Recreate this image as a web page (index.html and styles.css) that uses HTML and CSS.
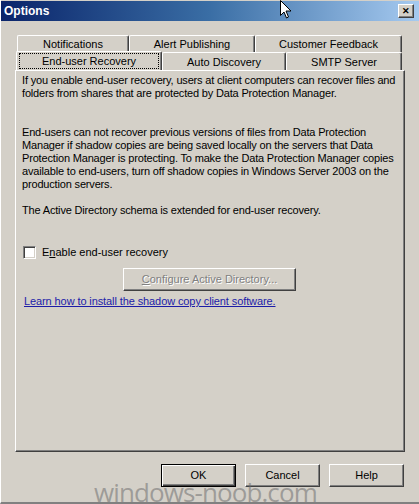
FILE: index.html
```html
<!DOCTYPE html>
<html lang="en">
  <head>
    <meta charset="UTF-8" />
    <title>Options</title>
    <link rel="stylesheet" href="styles.css">
  </head>
  <body>
    <div class="window">
      <div class="titlebar">
        <span class="title">Options</span>
        <span class="close">&#x2715;</span>
      </div>

      <div class="tabs">
        <div class="tab-row back">
          <div class="tab t-notif">Notifications</div>
          <div class="tab t-alert">Alert Publishing</div>
          <div class="tab t-cust">Customer Feedback</div>
        </div>
        <div class="tab-row front">
          <div class="tab t-user selected"><span class="focus">End-user Recovery</span></div>
          <div class="tab t-auto">Auto Discovery</div>
          <div class="tab t-smtp">SMTP Server</div>
        </div>
      </div>

      <div class="panel">
        <p>If you enable end-user recovery, users at client computers can recover files and<br>
        folders from shares that are protected by Data Protection Manager.</p>
        <p class="gap">End-users can not recover previous versions of files from Data Protection<br>
        Manager if shadow copies are being saved locally on the servers that Data<br>
        Protection Manager is protecting. To make the Data Protection Manager copies<br>
        available to end-users, turn off shadow copies in Windows Server 2003 on the<br>
        production servers.</p>
        <p class="ad">The Active Directory schema is extended for end-user recovery.</p>

        <label class="check"><span class="box"></span><span>E<u>n</u>able end-user recovery</span></label>
        <div class="configure"><span class="btn disabled"><u>C</u>onfigure Active Directory...</span></div>
        <a class="learn" href="#">Learn how to install the shadow copy client software.</a>
      </div>

      <div class="buttons">
        <span class="btn default">OK</span>
        <span class="btn">Cancel</span>
        <span class="btn">Help</span>
      </div>

      <div class="watermark">windows-noob.com</div>
      <svg class="cursor" width="12" height="19" viewBox="0 0 12 19">
        <path d="M0.5 0.5 L0.5 15.5 L4 12 L6.5 18 L8.5 17 L6 11 L11 11 Z" fill="#fff" stroke="#000" stroke-width="1"/>
      </svg>
    </div>
  </body>
</html>
```

FILE: styles.css
```css
body {
  margin: 0;
  padding: 0;
  background: #d4d0c8;
  font-family: "Liberation Sans", Arial, sans-serif;
  font-size: 11px;
  color: #000;
}
.window {
  position: relative;
  width: 419px;
  height: 504px;
  background: #d4d0c8;
  box-sizing: border-box;
  border-left: 1px solid #fff;
  border-bottom: 2px solid #808080;
  overflow: hidden;
}
.titlebar {
  height: 20px;
  margin-top: 1px;
  background: linear-gradient(to right, #0a246a, #3a6ea5 50%, #a6caf0);
  display: flex;
  align-items: center;
  justify-content: space-between;
  padding: 0 5px 0 3px;
}
.title {
  color: #fff;
  font-weight: bold;
  font-size: 12px;
}
.close {
  width: 14px;
  height: 12px;
  background: #d4d0c8;
  border: 1px solid;
  border-color: #fff #404040 #404040 #fff;
  box-shadow: inset -1px -1px #808080;
  font-size: 9px;
  font-weight: bold;
  line-height: 12px;
  text-align: center;
}
.tabs {
  margin-top: 14px;
  padding-left: 15px;
}
.tab-row {
  display: flex;
  height: 17px;
}
.tab-row.back {
  padding-left: 1px;
}
.tab-row.front {
  height: 18px;
}
.tab {
  box-sizing: border-box;
  border-top: 1px solid #fff;
  border-left: 1px solid #fff;
  border-right: 1px solid #404040;
  box-shadow: inset -1px 0 #808080;
  border-radius: 2px 2px 0 0;
  text-align: center;
  line-height: 16px;
  white-space: nowrap;
}
.t-notif { width: 112px; }
.t-alert { width: 126px; }
.t-cust { width: 147px; }
.t-user { width: 146px; }
.t-auto { width: 124px; }
.t-smtp { width: 116px; }
.tab-row.front .tab {
  line-height: 19px;
}
.tab.selected {
  position: relative;
  z-index: 1;
  height: 19px;
  margin-top: -1px;
  line-height: 16px;
  padding: 1px 2px 0;
  background: #d4d0c8;
}
.focus {
  display: block;
  border: 1px dotted #000;
  line-height: 14px;
  height: 16px;
  box-sizing: border-box;
}
.panel {
  box-sizing: border-box;
  margin-left: 14px;
  width: 390px;
  height: 382px;
  border: 1px solid;
  border-color: #fff #404040 #404040 #fff;
  box-shadow: inset -1px -1px #808080;
  padding: 3px 6px 0 6px;
  line-height: 13px;
}
.panel p {
  margin: 0;
  white-space: nowrap;
  letter-spacing: -0.17px;
}
.panel .gap {
  margin-top: 26px;
}
.panel .ad {
  margin-top: 13px;
}
.check {
  display: flex;
  align-items: center;
  gap: 6px;
  margin-top: 29px;
  margin-left: 1px;
}
.box {
  width: 13px;
  height: 13px;
  box-sizing: border-box;
  background: #fff;
  border: 1px solid;
  border-color: #808080 #fff #fff #808080;
  box-shadow: inset 1px 1px #404040, inset -1px -1px #d4d0c8;
}
.configure {
  margin-top: 9px;
  padding-left: 101px;
}
.btn {
  box-sizing: border-box;
  display: inline-block;
  width: 75px;
  height: 23px;
  line-height: 21px;
  text-align: center;
  border: 1px solid;
  border-color: #fff #404040 #404040 #fff;
  box-shadow: inset -1px -1px #808080;
}
.btn.disabled {
  width: 173px;
  color: #808080;
  text-shadow: 1px 1px #fff;
}
.learn {
  display: block;
  margin-top: 4px;
  margin-left: 2px;
  color: #1c1ca8;
  letter-spacing: -0.1px;
}
.buttons {
  display: flex;
  gap: 9px;
  padding-left: 160px;
  margin-top: 12px;
}
.btn.default {
  border: 1px solid #000;
  box-shadow: inset 1px 1px #fff, inset -1px -1px #404040, inset -2px -2px #808080;
}
.watermark {
  position: absolute;
  left: 93px;
  top: 474px;
  font-family: "Open Sans", sans-serif;
  font-size: 26px;
  color: rgba(110, 110, 110, 0.55);
  letter-spacing: -0.9px;
}
.cursor {
  position: absolute;
  left: 279px;
  top: 0;
}
```
